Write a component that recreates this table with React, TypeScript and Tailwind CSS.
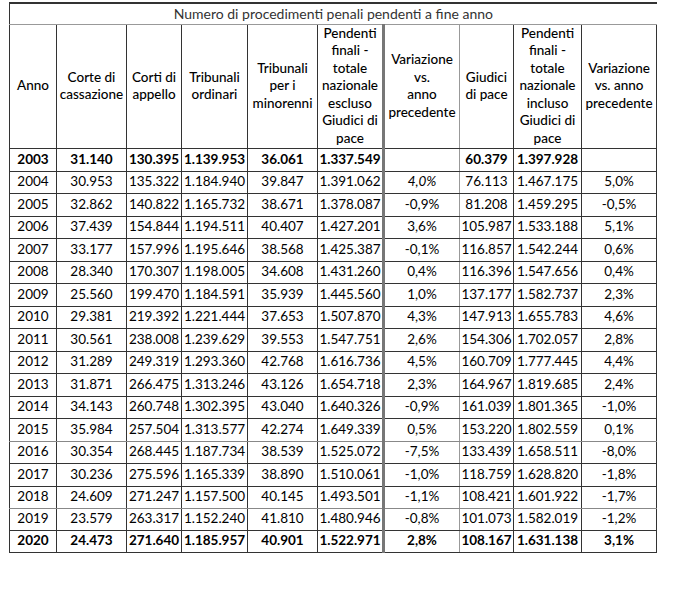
const rows: [string, string, string, string, string, string, string, string, string, string][] = [
  ["2003", "31.140", "130.395", "1.139.953", "36.061", "1.337.549", "", "60.379", "1.397.928", ""],
  ["2004", "30.953", "135.322", "1.184.940", "39.847", "1.391.062", "4,0%", "76.113", "1.467.175", "5,0%"],
  ["2005", "32.862", "140.822", "1.165.732", "38.671", "1.378.087", "-0,9%", "81.208", "1.459.295", "-0,5%"],
  ["2006", "37.439", "154.844", "1.194.511", "40.407", "1.427.201", "3,6%", "105.987", "1.533.188", "5,1%"],
  ["2007", "33.177", "157.996", "1.195.646", "38.568", "1.425.387", "-0,1%", "116.857", "1.542.244", "0,6%"],
  ["2008", "28.340", "170.307", "1.198.005", "34.608", "1.431.260", "0,4%", "116.396", "1.547.656", "0,4%"],
  ["2009", "25.560", "199.470", "1.184.591", "35.939", "1.445.560", "1,0%", "137.177", "1.582.737", "2,3%"],
  ["2010", "29.381", "219.392", "1.221.444", "37.653", "1.507.870", "4,3%", "147.913", "1.655.783", "4,6%"],
  ["2011", "30.561", "238.008", "1.239.629", "39.553", "1.547.751", "2,6%", "154.306", "1.702.057", "2,8%"],
  ["2012", "31.289", "249.319", "1.293.360", "42.768", "1.616.736", "4,5%", "160.709", "1.777.445", "4,4%"],
  ["2013", "31.871", "266.475", "1.313.246", "43.126", "1.654.718", "2,3%", "164.967", "1.819.685", "2,4%"],
  ["2014", "34.143", "260.748", "1.302.395", "43.040", "1.640.326", "-0,9%", "161.039", "1.801.365", "-1,0%"],
  ["2015", "35.984", "257.504", "1.313.577", "42.274", "1.649.339", "0,5%", "153.220", "1.802.559", "0,1%"],
  ["2016", "30.354", "268.445", "1.187.734", "38.539", "1.525.072", "-7,5%", "133.439", "1.658.511", "-8,0%"],
  ["2017", "30.236", "275.596", "1.165.339", "38.890", "1.510.061", "-1,0%", "118.759", "1.628.820", "-1,8%"],
  ["2018", "24.609", "271.247", "1.157.500", "40.145", "1.493.501", "-1,1%", "108.421", "1.601.922", "-1,7%"],
  ["2019", "23.579", "263.317", "1.152.240", "41.810", "1.480.946", "-0,8%", "101.073", "1.582.019", "-1,2%"],
  ["2020", "24.473", "271.640", "1.185.957", "40.901", "1.522.971", "2,8%", "108.167", "1.631.138", "3,1%"],
];

const widths = [47, 70, 55, 66, 70, 66, 76, 54, 68, 75];

const headers: string[][] = [
  ["Anno"],
  ["Corte di", "cassazione"],
  ["Corti di", "appello"],
  ["Tribunali", "ordinari"],
  ["Tribunali", "per i", "minorenni"],
  ["Pendenti", "finali -", "totale", "nazionale", "escluso", "Giudici di", "pace"],
  ["Variazione", "vs.", "anno", "precedente"],
  ["Giudici", "di pace"],
  ["Pendenti", "finali -", "totale", "nazionale", "incluso", "Giudici di", "pace"],
  ["Variazione", "vs. anno", "precedente"],
];

function cellBorder(i: number) {
  if (i === 5) return "border-r-[3px] border-r-[#777]";
  if (i === 6) return "border-r border-r-[#999]";
  return "border-r border-r-[#333]";
}

export default function App() {
  return (
    <div className="min-h-[596px] bg-white pl-[9px] pt-[2px] font-['Lato','Liberation_Sans',sans-serif] text-[13.5px] text-black">
      <table className="table-fixed border-collapse" style={{ width: 648 }}>
        <colgroup>
          {widths.map((w, i) => (
            <col key={i} style={{ width: w }} />
          ))}
        </colgroup>
        <thead>
          <tr className="h-[21px]">
            <th
              colSpan={10}
              className="border-t-2 border-l border-t-[#333] border-l-[#333] border-b border-b-[#999] p-0 text-center text-[14px] leading-none font-normal text-[#333]"
            >
              Numero di procedimenti penali pendenti a fine anno
            </th>
          </tr>
          <tr className="h-[124px]">
            {headers.map((h, i) => (
              <th
                key={i}
                className={`border-b border-b-[#333] ${i === 0 ? "border-l border-l-[#333]" : ""} ${cellBorder(i)} p-0 text-center align-middle text-[13.5px] leading-[17.5px] font-medium whitespace-nowrap`}
              >
                {h.map((line, li) => (
                  <div key={li}>{line}</div>
                ))}
              </th>
            ))}
          </tr>
        </thead>
        <tbody>
          {rows.map((r, ri) => {
            const bold = ri === 0 || ri === rows.length - 1;
            const tall = ri % 2 === 0 && ri !== 16;
            return (
              <tr key={ri} className={tall ? "h-[23px]" : "h-[22px]"}>
                {r.map((c, ci) => (
                  <td
                    key={ci}
                    className={`border-b ${ri === 12 || ri === 15 ? "border-b-[#888]" : "border-b-[#333]"} ${ci === 0 ? "border-l border-l-[#333]" : ""} ${cellBorder(ci)} p-0 text-center align-middle leading-none whitespace-nowrap ${bold ? "font-bold" : ""} ${ri === 1 && ci === 6 ? "italic" : ""}`}
                  >
                    {c}
                  </td>
                ))}
              </tr>
            );
          })}
        </tbody>
      </table>
    </div>
  );
}
